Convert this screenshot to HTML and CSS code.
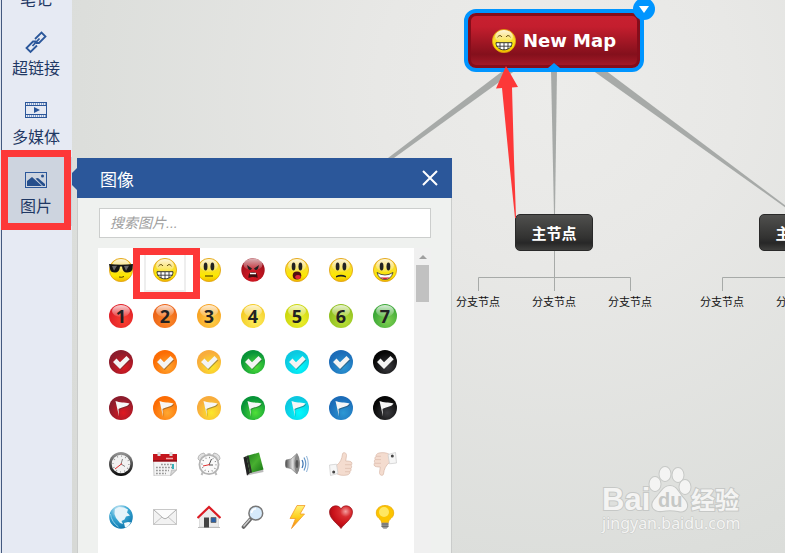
FILE: index.html
```html
<!DOCTYPE html>
<html lang="zh-CN">
<head>
  <meta charset="UTF-8" />
  <meta name="viewport" content="width=device-width, initial-scale=1.0"/>
  <title>New Map</title>
  <link rel="stylesheet" href="styles.css">
</head>
<body>
  <!-- 共用图形 -->
  <svg class="defs" aria-hidden="true">
    <defs>
      <linearGradient id="yellow" x1="0" y1="0" x2="0" y2="1">
        <stop offset="0" stop-color="#f5c21c"/><stop offset=".4" stop-color="#f8dc30"/><stop offset=".75" stop-color="#fbe800"/><stop offset="1" stop-color="#f0b800"/>
      </linearGradient>
      <linearGradient id="gloss" x1="0" y1="0" x2="0" y2="1">
        <stop offset="0" stop-color="#fff" stop-opacity=".85"/><stop offset="1" stop-color="#fff" stop-opacity=".1"/>
      </linearGradient>
      <radialGradient id="rage" cx=".5" cy=".75" r=".7">
        <stop offset="0" stop-color="#e01822"/><stop offset="1" stop-color="#98101c"/>
      </radialGradient>
      <linearGradient id="metal" x1="0" y1="0" x2="0" y2="1">
        <stop offset="0" stop-color="#999"/><stop offset="1" stop-color="#080808"/>
      </linearGradient>
      <radialGradient id="sea" cx=".4" cy=".2" r=".85">
        <stop offset="0" stop-color="#e0f2fa"/><stop offset=".45" stop-color="#3aa8d4"/><stop offset="1" stop-color="#0870a8"/>
      </radialGradient>
      <radialGradient id="heartfill" cx=".7" cy=".25" r=".8">
        <stop offset="0" stop-color="#f4a0a0"/><stop offset=".3" stop-color="#d82c30"/><stop offset=".7" stop-color="#c81018"/><stop offset="1" stop-color="#980c14"/>
      </radialGradient>
      <linearGradient id="bolt" x1="0" y1="0" x2="0" y2="1">
        <stop offset="0" stop-color="#fff27a"/><stop offset=".5" stop-color="#fdd020"/><stop offset="1" stop-color="#f47c10"/>
      </linearGradient>
      <linearGradient id="cone" x1="0" y1="0" x2="1" y2="0">
        <stop offset="0" stop-color="#444"/><stop offset=".5" stop-color="#ddd"/><stop offset="1" stop-color="#666"/>
      </linearGradient>
      <linearGradient id="leaf" x1="0" y1="0" x2="1" y2="1">
        <stop offset="0" stop-color="#1c7a1c"/><stop offset=".5" stop-color="#48b030"/><stop offset="1" stop-color="#147014"/>
      </linearGradient>
      <symbol id="face" viewBox="0 0 24 24">
        <circle cx="12" cy="12" r="11.6" fill="url(#yellow)" stroke="#e0a010" stroke-width=".8"/>
        <ellipse cx="12" cy="7.5" rx="9" ry="6.5" fill="url(#gloss)"/>
      </symbol>
      <symbol id="eyes" viewBox="0 0 24 24">
        <ellipse cx="8.6" cy="8.6" rx="1.9" ry="4" fill="#222"/>
        <ellipse cx="15.4" cy="8.6" rx="1.9" ry="4" fill="#222"/>
      </symbol>
      <symbol id="grin" viewBox="0 0 24 24">
        <use href="#face"/>
        <path d="M5.5 8.2Q8 5 10 8M14 8q2-3 4.5.2" fill="none" stroke="#665010" stroke-width="1"/>
        <path d="M4 13.7h16c0 9.500-16 9.500-16 0z" fill="#fff" stroke="#333" stroke-width="1"/>
        <path d="M4.500 17.200h15M8 14v6M12 14v7M16 14v6" fill="none" stroke="#333" stroke-width=".9"/>
      </symbol>
      <symbol id="check" viewBox="0 0 24 24">
        <path d="M4 12l3.500-3.500 3.500 3.700L17.500 6l3.200 3.300L11 19z" fill="#333" opacity=".4" transform="translate(.6 1)"/>
        <path d="M4 12l3.500-3.500 3.500 3.700L17.500 6l3.200 3.300L11 19z" fill="#f4f4f4"/>
      </symbol>
      <symbol id="flag" viewBox="0 0 24 24">
        <path d="M6.500 5c4.500 2 8.500 1 14 2.500-2.500 4-7.500 3-11 5.500l.5 7.500z" fill="#333" opacity=".4" transform="translate(.6 1)"/>
        <path d="M6.500 5c4.500 2 8.500 1 14 2.500-2.500 4-7.500 3-11 5.500l.5 7.500z" fill="#f6f6f6"/>
      </symbol>
      <symbol id="thumb" viewBox="0 0 24 24">
        <path d="M7.500 13.500C11 11 13 7 13.500 2c.2-2 4-2 4 1.500l-.8 5.500c3 0 6 .3 6.200 2 .2 1.200-.5 2-.8 2.200.8 1 .7 2.500-.2 3.300.5 1.300 0 2.600-.9 3 .2 1.500-.8 3-3 3.500-4 .8-8 .3-10.500-1.500z" fill="#f4dccf" stroke="#d8b8a8" stroke-width=".7"/>
        <path d="M16 12.700h6M16 16.400h5.800M16 19.700h5" stroke="#dcbcac" stroke-width=".7"/>
        <path d="M.5 13l7-.8 1.500 9.300-7.500 2z" fill="#f6f6f6" stroke="#ccc" stroke-width=".7"/>
        <circle cx="4.700" cy="20" r="1.500" fill="#444"/>
      </symbol>
    </defs>
  </svg>

  <div class="app">
    <!-- 左侧工具栏 -->
    <nav class="sidebar">
      <button class="tool" type="button">
        <svg width="24" height="24" viewBox="0 0 24 24"></svg>
        <span>笔记</span>
      </button>
      <button class="tool" type="button">
        <svg width="24" height="24" viewBox="0 0 24 24" fill="none" stroke="#2b579a" stroke-width="1.800">
          <path d="M11 9l6.500-6.500 4 4-6.500 6.500h-3M13 15.500L6.500 22l-4-4L9 11.500h3M8.500 16l7-7.500"/>
        </svg>
        <span>超链接</span>
      </button>
      <button class="tool" type="button">
        <svg width="24" height="24" viewBox="0 0 24 24" fill="none" stroke="#2b579a">
          <rect x="1.500" y="3.500" width="21" height="15"/>
          <path d="M2 6.500h20M2 15.500h20"/>
          <path d="M3 5h19M3 17h19" stroke-dasharray="1 1"/>
          <path d="M10 8l6 3-6 3z" fill="#2b579a" stroke="none"/>
        </svg>
        <span>多媒体</span>
      </button>
      <button class="tool active" type="button">
        <svg width="24" height="24" viewBox="0 0 24 24">
          <rect x="1.500" y="4.500" width="21" height="15" fill="none" stroke="#2b579a"/>
          <path d="M3 18v-5l5-4 10 9zM11.500 10.500l2.500-.5 7 6v2h-2z" fill="#264f8c"/>
          <circle cx="18.500" cy="8" r="1.500" fill="#264f8c"/>
        </svg>
        <span>图片</span>
      </button>
      <div class="mark mark-tool"></div>
    </nav>

    <!-- 思维导图画布 -->
    <main class="canvas">
      <svg class="links" aria-hidden="true">
        <g fill="#a7aaa8">
          <path d="M432 70h12L322 158h-6z"/>
          <path d="M479 70h6l-2 145h-1z"/>
          <path d="M520 70h13l193 145h-2z"/>
        </g>
        <path d="M482.500 250v41M406.500 291v-13.500h152V291M726.500 250v41M650.500 291v-13.500h152V291" fill="none" stroke="#a7aaa8"/>
      </svg>

      <div class="node root">
        <svg width="24" height="24"><use href="#grin"/></svg>
        <span>New Map</span>
        <button class="toggle" type="button" aria-label="展开菜单"></button>
      </div>

      <div class="topic topic-a">
        <div class="node main">主节点</div>
        <div class="branches"><span>分支节点</span><span>分支节点</span><span>分支节点</span></div>
      </div>
      <div class="topic topic-b">
        <div class="node main">主节点</div>
        <div class="branches"><span>分支节点</span><span>分支节点</span><span>分支节点</span></div>
      </div>

      <svg class="pointer" aria-hidden="true">
        <path d="M434 66l12 21-6 .5 2 72.500 2 58h-1l-6-58-7-72-6 .5z" fill="#fd3838"/>
      </svg>

      <!-- 图像面板 -->
      <section class="panel">
        <header class="panel-head">
          <h2>图像</h2>
          <button class="close" type="button" aria-label="关闭">
            <svg width="18" height="18" viewBox="0 0 18 18"><path d="M2 2l14 14M16 2L2 16" stroke="#fff" stroke-width="2"/></svg>
          </button>
        </header>
        <div class="panel-body">
          <input class="search" type="text" placeholder="搜索图片..." aria-label="搜索图片">
          <div class="picker">
            <div class="icons">
              <div class="grid">
                <button type="button"><svg width="24" height="24" viewBox="0 0 24 24"><use href="#face"/><path d="M0 6q12 1.500 24 0l-.5 5q-1 3.500-5.500 3.500t-5-6h-2q-.5 6-5 6T1 11z" fill="#151515"/><path d="M3 8l5-.2-3 5zM15 8l5-.2-3 5z" fill="#666"/><path d="M10 19q3 .8 5-.5" fill="none" stroke="#554400"/></svg></button>
                <button class="picked" type="button"><svg width="24" height="24"><use href="#grin"/></svg></button>
                <button type="button"><svg width="24" height="24" viewBox="0 0 24 24"><use href="#face"/><use href="#eyes"/><path d="M8 18h8" stroke="#665500" stroke-width="1.300"/></svg></button>
                <button type="button"><svg width="24" height="24" viewBox="0 0 24 24"><circle cx="12" cy="12" r="11.700" fill="url(#rage)"/><ellipse cx="12" cy="6.500" rx="9.500" ry="6" fill="url(#gloss)" opacity=".8"/><path d="M6 7l5 3.500q-2 3-4 0zM18 7l-5 3.500q2 3 4 0z" fill="#222"/><path d="M7.500 20q-.5-6 4.500-6t4.500 6q-4.500-2-9 0z" fill="#401010"/><path d="M9 15.500h6" stroke="#fff" stroke-width="1.500"/></svg></button>
                <button type="button"><svg width="24" height="24" viewBox="0 0 24 24"><use href="#face"/><use href="#eyes"/><ellipse cx="12" cy="17.500" rx="4.300" ry="3.900" fill="#501010"/><ellipse cx="13" cy="19" rx="2.800" ry="2" fill="#e02838"/></svg></button>
                <button type="button"><svg width="24" height="24" viewBox="0 0 24 24"><use href="#face"/><use href="#eyes"/><path d="M7 19.500v-1.500q5-2.500 10 0v1.500q-5-2-10 0z" fill="#222"/></svg></button>
                <button type="button"><svg width="24" height="24" viewBox="0 0 24 24"><use href="#face"/><use href="#eyes"/><path d="M4 14.500q8 5 16 0-2 7-8 7t-8-7z" fill="#fff" stroke="#333" stroke-width=".8"/><path d="M7.500 19q4.500 1 9 0-4.500 4.500-9 0z" fill="#d82030"/></svg></button>

                <button type="button"><span class="ball num n1">1</span></button>
                <button type="button"><span class="ball num n2">2</span></button>
                <button type="button"><span class="ball num n3">3</span></button>
                <button type="button"><span class="ball num n4">4</span></button>
                <button type="button"><span class="ball num n5">5</span></button>
                <button type="button"><span class="ball num n6">6</span></button>
                <button type="button"><span class="ball num n7">7</span></button>

                <button type="button"><svg class="ball red"><use href="#check"/></svg></button>
                <button type="button"><svg class="ball orange"><use href="#check"/></svg></button>
                <button type="button"><svg class="ball amber"><use href="#check"/></svg></button>
                <button type="button"><svg class="ball green"><use href="#check"/></svg></button>
                <button type="button"><svg class="ball cyan"><use href="#check"/></svg></button>
                <button type="button"><svg class="ball blue"><use href="#check"/></svg></button>
                <button type="button"><svg class="ball black"><use href="#check"/></svg></button>

                <button type="button"><svg class="ball red"><use href="#flag"/></svg></button>
                <button type="button"><svg class="ball orange"><use href="#flag"/></svg></button>
                <button type="button"><svg class="ball amber"><use href="#flag"/></svg></button>
                <button type="button"><svg class="ball green"><use href="#flag"/></svg></button>
                <button type="button"><svg class="ball cyan"><use href="#flag"/></svg></button>
                <button type="button"><svg class="ball blue"><use href="#flag"/></svg></button>
                <button type="button"><svg class="ball black"><use href="#flag"/></svg></button>
              </div>

              <div class="grid loose">
                <!-- 时钟 -->
                <button type="button"><svg width="24" height="24" viewBox="0 0 24 24"><circle cx="12" cy="12" r="12" fill="url(#metal)"/><circle cx="12" cy="12" r="9.300" fill="#f2f2f2"/><circle cx="12" cy="12" r="7.900" fill="none" stroke="#888" stroke-width="1.400" stroke-dasharray=".8 3.336"/><path d="M12 12l1.500-5M12 12l4 2.500" stroke="#666" stroke-width=".8"/><path d="M13 11.500l-7 5.500" stroke="#e03030"/></svg></button>
                <!-- 日历 -->
                <button type="button"><svg width="24" height="24" viewBox="0 0 24 24"><path d="M.5 6h23v12l-6 6H1z" fill="#f4f4f4" stroke="#bbb" stroke-width=".8"/><path d="M23.500 18h-5l-1 5.500z" fill="#d8d8d8" stroke="#aaa" stroke-width=".6"/><path d="M0 2h24v7.500H0z" fill="#c4161e"/><path d="M0 8h24v1.500H0z" fill="#901018"/><path d="M6 0v4M18 0v4" stroke="#ddd" stroke-width="3"/><path d="M13 6.500h7" stroke="#f0a8a8" stroke-width="1.500"/><path d="M8 12.500h11M3 15.500h16M3 18.500h13M3 21.500h10" stroke="#999" stroke-width="1.600" stroke-dasharray="1.800 1.200"/><path d="M19 12h2v5h-2z" fill="#38b0b8"/></svg></button>
                <!-- 闹钟 -->
                <button type="button"><svg width="24" height="24" viewBox="0 0 24 24"><path d="M6 20l-1.500 3M18 20l1.500 3" stroke="#bbb" stroke-width="2"/><path d="M1 7q0-5 6-6l2 3-6 5zM23 7q0-5-6-6l-2 3 6 5z" fill="#e0e0e0" stroke="#aaa" stroke-width=".8"/><path d="M10.500 1h3v3h-3z" fill="#ccc"/><circle cx="12" cy="12.500" r="9.600" fill="#fafafa" stroke="#b4b4b4" stroke-width="1.800"/><circle cx="12" cy="12.500" r="7" fill="none" stroke="#777" stroke-width="1.300" stroke-dasharray=".8 2.860"/><path d="M12 13l2.500-6M12 13h4" stroke="#555"/><path d="M13 12.500l-7 1.500" stroke="#e03030"/></svg></button>
                <!-- 书 -->
                <button type="button"><svg width="24" height="24" viewBox="0 0 24 24"><path d="M2.500 5l3.500 18.500L22.500 20l-.5-3z" fill="#bbb"/><path d="M2.500 5.500l3-1.500 3.500 17-3 2.500z" fill="#222"/><path d="M5.500 4L18 .500l4.500 17L9 21z" fill="url(#leaf)"/><path d="M5.500 4l2-.5 3.500 17-2 .5z" fill="#2a3028"/></svg></button>
                <!-- 喇叭 -->
                <button type="button"><svg width="24" height="24" viewBox="0 0 24 24"><path d="M1 8l5-1 6-5.500q5 9 0 20.500l-6-5.500-5-1q-1.500-3.500 0-7.500z" fill="url(#cone)" stroke="#777" stroke-width=".6"/><ellipse cx="12" cy="12" rx="2.600" ry="9" fill="#8a8a8a"/><ellipse cx="12" cy="12" rx="1.400" ry="4" fill="#555"/><path d="M17 8q2.200 4 0 8" fill="none" stroke="#3870b0" stroke-width="1.200"/><path d="M19 5.500q3.500 6.500 0 13" fill="none" stroke="#6898c8" stroke-width="1.200"/><path d="M21.500 4q3.500 8 0 16" fill="none" stroke="#90b4d8"/></svg></button>
                <button type="button"><svg width="24" height="24"><use href="#thumb"/></svg></button>
                <button type="button"><svg class="turned" width="24" height="24"><use href="#thumb"/></svg></button>

                <!-- 地球 -->
                <button type="button"><svg width="24" height="24" viewBox="0 0 24 24"><circle cx="12" cy="12" r="11.800" fill="url(#sea)"/><path d="M6 4l4-2 5 .5 4 2-1 3 3 3-4 1-1.500 3-3 1.500 1.500 3-3-1-4-5-1.500-4z" fill="#e6f4fa"/><path d="M15 18l4-1 3 .5-3 4-3 1z" fill="#f2fafd"/><path d="M1.500 9q1 8 8 13" fill="none" stroke="#8cd0ec"/></svg></button>
                <!-- 信封 -->
                <button type="button"><svg width="24" height="24" viewBox="0 0 24 24"><rect x=".5" y="4.500" width="23" height="15" fill="#f2f2f2" stroke="#c8c8c8"/><path d="M1 19l8.500-7.500M23 19l-8.500-7.500" stroke="#c4c4c4"/><path d="M1 5l9 8q2 1.500 4 0l9-8" fill="#fbfbfb" stroke="#b0b0b0"/></svg></button>
                <!-- 房子 -->
                <button type="button"><svg width="24" height="24" viewBox="0 0 24 24"><path d="M2.500 12L12 3l9.500 9v10h-19z" fill="#ebebeb" stroke="#ccc" stroke-width=".6"/><path d="M1 22.500h22" stroke="#bbb"/><path d="M7 12.500h5v10H7z" fill="#444"/><path d="M14 12.500h5v5h-5z" fill="#2860a8" stroke="#666" stroke-width=".8"/><path d="M.5 13L12 2l11.500 11" fill="none" stroke="#dc1c24" stroke-width="2.200"/></svg></button>
                <!-- 放大镜 -->
                <button type="button"><svg width="24" height="24" viewBox="0 0 24 24"><path d="M9.500 14l-7 8" stroke="#666" stroke-width="3.600" stroke-linecap="round"/><path d="M9 14l-6.500 7.500" stroke="#ccc" stroke-width="1.400"/><circle cx="14.800" cy="8.200" r="6.900" fill="#d6eafb" stroke="#777" stroke-width="1.500"/><path d="M10.500 8q.5-4 4.500-4.300" fill="none" stroke="#fff" stroke-width="1.500"/></svg></button>
                <!-- 闪电 -->
                <button type="button"><svg width="24" height="24" viewBox="0 0 24 24"><path d="M12 .5h8L15 9h4.500L6.500 23.500l4-10H5z" fill="url(#bolt)" stroke="#f49a28" stroke-width=".8"/></svg></button>
                <!-- 爱心 -->
                <button type="button"><svg width="24" height="24" viewBox="0 0 24 24"><path d="M12 23.500C9 19 .5 14 .5 7 .5.500 9.500-1.500 12 4c2.500-5.500 11.500-3.500 11.500 3 0 7-8.500 12-11.500 16.500z" fill="url(#heartfill)" stroke="#981018" stroke-width=".7"/></svg></button>
                <!-- 灯泡 -->
                <button type="button"><svg width="24" height="24" viewBox="0 0 24 24"><path d="M8.500 17.500c0-4-5.200-4-5.200-9.500 0-10 17.400-10 17.400 0 0 5.500-5.200 5.500-5.200 9.500z" fill="#fcc400" stroke="#eaa800" stroke-width=".8"/><ellipse cx="11" cy="7" rx="5" ry="5" fill="#fff07a" opacity=".8"/><path d="M8.500 17.800h7v4l-2 2h-3l-2-2z" fill="#999"/><path d="M8.500 19h7M8.500 21.300h7" stroke="#555" stroke-width=".8"/></svg></button>
              </div>
            </div>
            <div class="scroll"><i class="up"></i><i class="bar"></i></div>
            <div class="mark mark-icon"></div>
          </div>
        </div>
      </section>

      <!-- 水印 -->
      <svg class="watermark" width="144" height="72" viewBox="0 0 144 72">
        <g fill="#f4f4f3" stroke="#c6c8c6" stroke-width="2" paint-order="stroke">
          <text class="wm-logo" x="1" y="46">Bai</text>
          <ellipse cx="54" cy="20" rx="5.500" ry="7"/>
          <ellipse cx="64" cy="10" rx="5.500" ry="7"/>
          <ellipse cx="77" cy="11" rx="5.500" ry="7"/>
          <ellipse cx="84" cy="23" rx="5.500" ry="7"/>
          <path d="M69 22c7 0 9 8 14 13 7 8 1 14-6 12-5-1-11-1-16 0-8 1-13-5-7-12 5-5 8-13 15-13z"/>
          <text class="wm-cn" x="90" y="45">经验</text>
          <text class="wm-url" x="1" y="65">jingyan.baidu.com</text>
        </g>
        <text class="wm-du" x="57" y="43">du</text>
      </svg>
    </main>
  </div>
</body>
</html>
```

FILE: styles.css
```css
* {
  box-sizing: border-box;
}
body {
  margin: 0;
  font-family: "Liberation Sans", "Noto Sans CJK SC", sans-serif;
  color: #1f3864;
}
button {
  padding: 0;
  border: none;
  background: none;
  font: inherit;
  color: inherit;
  cursor: pointer;
}
svg {
  display: block;
}
.defs {
  position: absolute;
  width: 0;
  height: 0;
}
.app {
  display: flex;
  height: 100vh;
  padding-left: 1px;
  background-color: #dfe5ef;
  overflow: hidden;
}

/* 左侧工具栏 */
.sidebar {
  position: relative;
  z-index: 2;
  flex: none;
  display: flex;
  flex-direction: column;
  width: 71px;
  border-left: 1px solid #44597f;
  background-color: #e6eaf3;
}
.tool {
  flex: none;
  display: flex;
  flex-direction: column;
  align-items: center;
  gap: 3px;
  height: 69px;
  padding: 11px 2px 0 0;
  font-size: 16px;
  line-height: 24px;
}
.tool:first-child {
  margin-top: -50px;
}
.tool.active {
  background-color: #cdd4df;
}

/* 红色标注框 */
.mark {
  position: absolute;
  border: 7px solid #fd3838;
  pointer-events: none;
}
.mark-tool {
  top: 150px;
  left: -1px;
  width: 70px;
  height: 80px;
}
.mark-icon {
  top: 0;
  left: 35px;
  width: 67px;
  height: 51px;
}

/* 画布 */
.canvas {
  position: relative;
  flex: 1;
  background: radial-gradient(circle at 68% 16%, #ececea 0, #e8e8e6 180px, #dcdedb 480px, #d6d8d5 700px);
}
.links,
.pointer {
  position: absolute;
  top: 0;
  left: 0;
  width: 100%;
  height: 100%;
}
.pointer {
  pointer-events: none;
}
.node {
  display: flex;
  align-items: center;
  justify-content: center;
  color: #fff;
  font-weight: bold;
}
.root {
  position: absolute;
  top: 9px;
  left: 392px;
  width: 180px;
  height: 63px;
  gap: 7px;
  border: 4px solid #0095ff;
  border-radius: 12px;
  background: linear-gradient(#c82030 0, #c41e2e 25%, #84101c 75%, #ac1c2a 100%);
  box-shadow: inset 0 0 0 3px #850d1b;
  font-family: "DejaVu Sans", sans-serif;
  font-size: 18px;
}
.root::after {
  content: "";
  position: absolute;
  bottom: 0;
  left: 80px;
  border: 6px solid transparent;
  border-top: none;
  border-bottom: 5px solid #0095ff;
}
.toggle {
  position: absolute;
  top: -15px;
  right: -15px;
  display: grid;
  place-items: center;
  width: 22px;
  height: 22px;
  border-radius: 50%;
  background-color: #0095ff;
}
.toggle::before {
  content: "";
  border: 5px solid transparent;
  border-top: 7px solid #fff;
  border-bottom: none;
}
.topic {
  position: absolute;
  top: 214px;
  display: flex;
  flex-direction: column;
  align-items: center;
  gap: 43px;
  width: 228px;
}
.topic-a {
  left: 368px;
}
.topic-b {
  left: 612px;
}
.main {
  width: 78px;
  height: 37px;
  border: 1px solid #292929;
  border-radius: 5px;
  background: linear-gradient(#50504e 0, #323231 65%, #272727 80%, #40403e 100%);
  font-size: 15px;
}
.branches {
  display: flex;
  width: 100%;
  color: #111;
  font-size: 11px;
  line-height: 16px;
}
.branches span {
  flex: 1;
  text-align: center;
}

/* 图像面板 */
.panel {
  position: absolute;
  top: 158px;
  bottom: 0;
  left: 5px;
  display: flex;
  flex-direction: column;
  width: 375px;
}
.panel::before {
  content: "";
  position: absolute;
  top: 10px;
  left: -11px;
  border: 11px solid transparent;
  border-left: none;
  border-right-color: #2b579a;
}
.panel-head {
  flex: none;
  display: flex;
  align-items: center;
  justify-content: space-between;
  height: 40px;
  padding: 0 13px 0 23px;
  background-color: #2b579a;
  color: #fff;
}
.panel-head h2 {
  margin: 0;
  font-size: 17px;
  font-weight: normal;
}
.panel-body {
  flex: 1;
  display: flex;
  flex-direction: column;
  gap: 10px;
  min-height: 0;
  padding: 10px 20px 0;
  border: 1px solid #cacccb;
  border-width: 0 1px;
  background-color: #eff1ef;
}
.search {
  flex: none;
  height: 30px;
  margin-left: 1px;
  padding: 0 10px;
  border: 1px solid #cccecd;
  background-color: #fff;
  font: inherit;
  font-size: 14px;
}
.search::placeholder {
  color: #a0a0a0;
  font-style: italic;
}
.picker {
  position: relative;
  flex: 1;
  display: flex;
  min-height: 0;
}
.icons {
  flex: 1;
  overflow: hidden;
  padding: 0 1px;
  background-color: #fff;
}
.grid {
  display: grid;
  grid-template-columns: repeat(7, 44px);
  grid-auto-rows: 44px;
  row-gap: 2px;
}
.grid.loose {
  row-gap: 9px;
  margin-top: 12px;
}
.grid button {
  display: grid;
  place-items: center;
}
.grid .picked {
  margin: 0 1px;
  border: 2px solid #eee;
}
.scroll {
  display: flex;
  flex-direction: column;
  align-items: center;
  gap: 6px;
  width: 17px;
  padding-top: 7px;
  background-color: #f0f0f0;
}
.up {
  border: 4px solid transparent;
  border-top: none;
  border-bottom-color: #a0a0a0;
}
.bar {
  width: 13px;
  height: 37px;
  background-color: #c1c1c1;
}
.turned {
  transform: rotate(180deg);
}

/* 彩色圆形图标 */
.ball {
  display: block;
  width: 24px;
  height: 24px;
  border-radius: 50%;
  background: radial-gradient(circle at 60% 70%, var(--light), var(--dark) 65%);
}
.num {
  position: relative;
  z-index: 0;
  color: #222;
  font-family: "Open Sans", sans-serif;
  font-size: 18px;
  font-weight: bold;
  line-height: 24px;
  text-align: center;
}
.num::before {
  content: "";
  position: absolute;
  z-index: -1;
  top: 1px;
  left: 3px;
  width: 18px;
  height: 12px;
  border-radius: 50%;
  background: linear-gradient(rgba(255, 255, 255, 0.8), rgba(255, 255, 255, 0.1));
}
.n1 { --light: #fa4030; --dark: #e02028; }
.n2 { --light: #fc8a28; --dark: #ec6418; }
.n3 { --light: #fed048; --dark: #f8a424; }
.n4 { --light: #fef060; --dark: #f4cc28; }
.n5 { --light: #f0f030; --dark: #ccd810; }
.n6 { --light: #bce038; --dark: #90c020; }
.n7 { --light: #80d050; --dark: #3ca838; }
.red { --light: #e01820; --dark: #8c1c2c; }
.orange { --light: #ffa830; --dark: #fc6c04; }
.amber { --light: #fce828; --dark: #f8ac3c; }
.green { --light: #50e038; --dark: #089438; }
.cyan { --light: #00fcff; --dark: #0cc8e0; }
.blue { --light: #2c98d4; --dark: #1c6cb8; }
.black { --light: #3c3c40; --dark: #060606; }

/* 水印 */
.watermark {
  position: absolute;
  right: 40px;
  bottom: 17px;
}
.wm-logo {
  font: bold 31px "Liberation Sans", sans-serif;
}
.wm-du {
  font: bold 20px "Liberation Sans", sans-serif;
  fill: #c6c8c6;
}
.wm-cn {
  font: bold 24px "Noto Sans CJK SC", sans-serif;
}
.wm-url {
  font: 16px "Noto Sans", sans-serif;
  stroke-width: 1px;
}
```
